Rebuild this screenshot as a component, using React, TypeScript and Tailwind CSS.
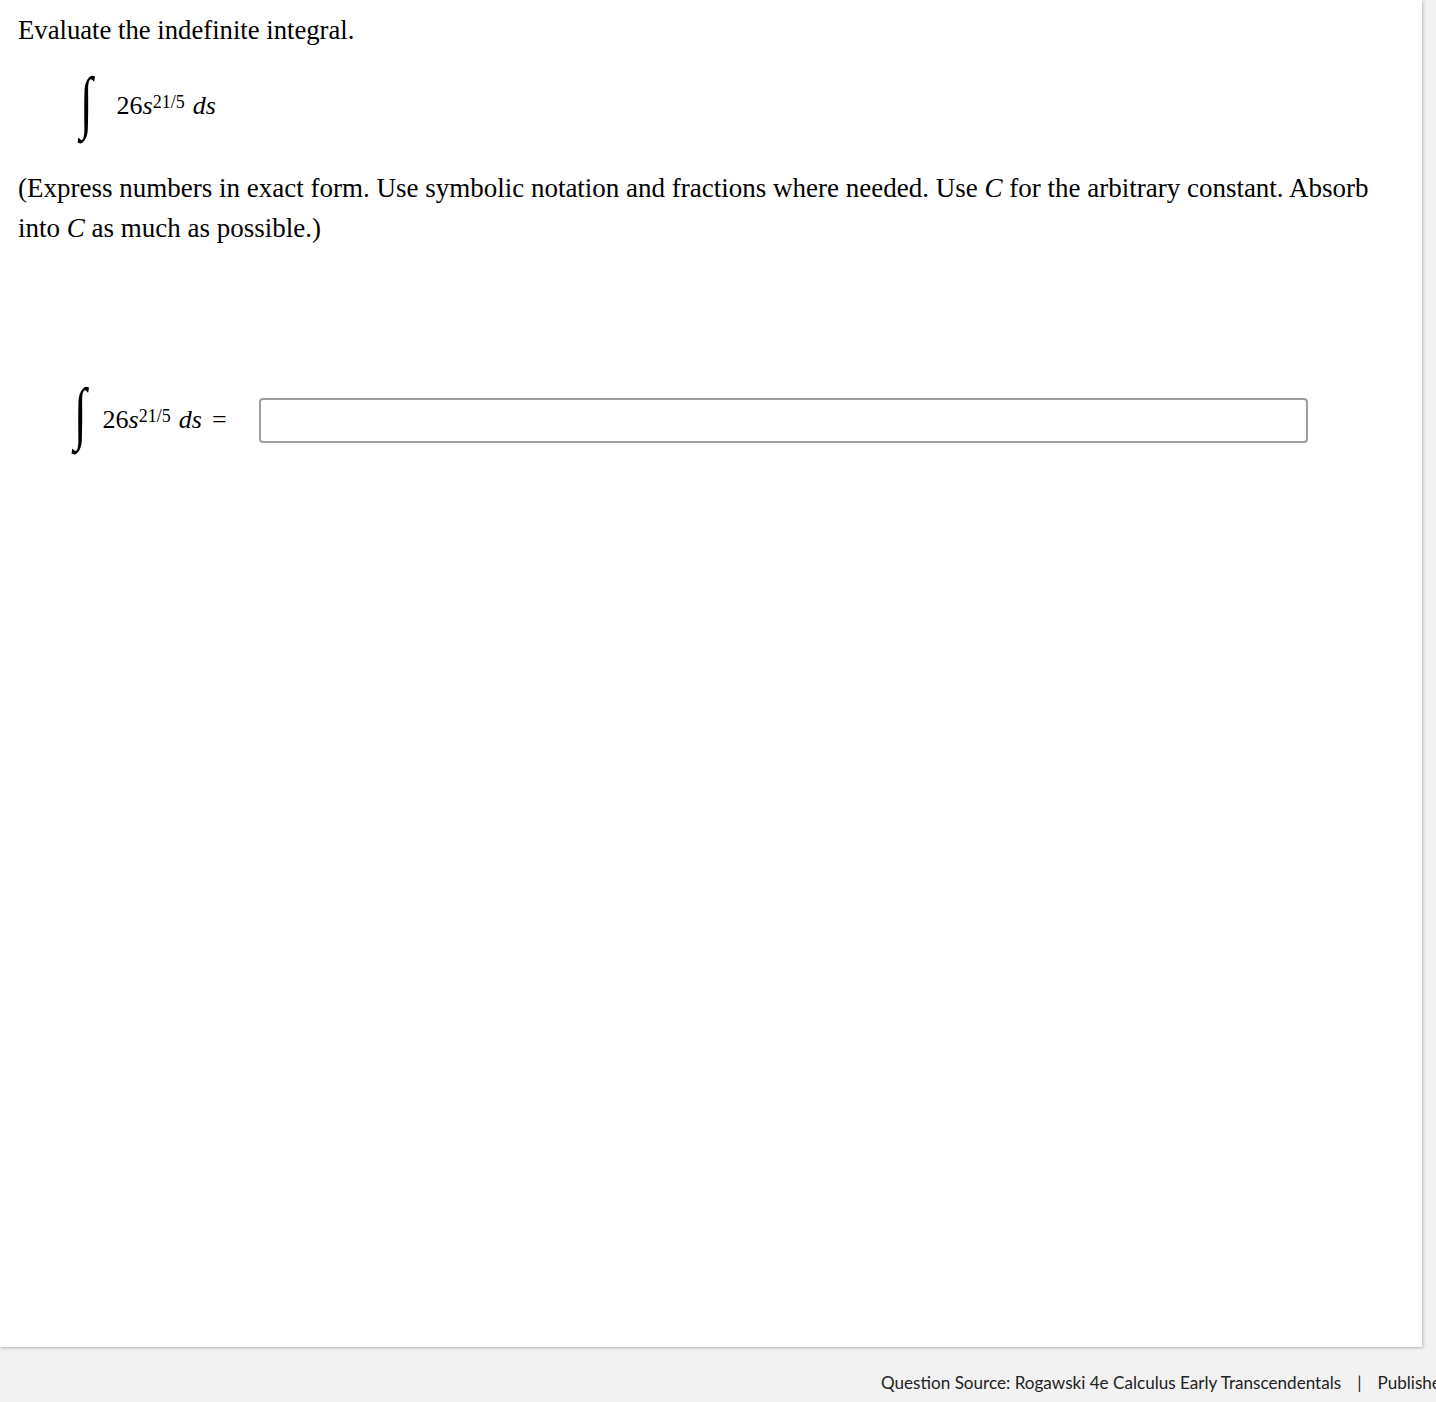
import React from 'react';

function IntegralExpr({ equals = false }: { equals?: boolean }) {
  return (
    <span className="inline-flex items-center font-['Liberation_Serif',serif] text-black">
      <span
        className={
          equals
            ? 'inline-block text-[46px] leading-none italic scale-y-[1.5] relative -top-[7px] mr-[16px]'
            : 'inline-block text-[46px] leading-none italic scale-y-[1.5] -mt-[2px] mr-[24px]'
        }
      >
        ∫
      </span>
      <span className={equals ? 'text-[26px] leading-none whitespace-nowrap' : 'text-[26px] leading-none whitespace-nowrap relative top-[3px]'}>
        26<i>s</i>
        <sup className="text-[18px] relative -top-[6px]">21/5</sup>
        <span className="ml-[8px]">
          <i>ds</i>
        </span>
        {equals && <span className="ml-[10px]">=</span>}
      </span>
    </span>
  );
}

export default function App() {
  return (
    <div className="h-[1402px] w-[1436px] bg-[#f2f2f2] overflow-hidden flex flex-col">
      <div className="w-[1422px] h-[1347px] shrink-0 bg-white shadow-[1px_1px_3px_rgba(0,0,0,0.25)] font-['Liberation_Serif',serif] text-black">
        <div className="px-[18px] pt-[12px]">
          <p className="text-[26.7px] leading-[36px]">Evaluate the indefinite integral.</p>

          <div className="mt-[30px] ml-[62px] h-[50px] flex items-center">
            <IntegralExpr />
          </div>

          <p className="mt-[40px] text-[27px] leading-[40px] pr-[30px]">
            (Express numbers in exact form. Use symbolic notation and fractions where needed. Use <i>C</i> for the
            arbitrary constant. Absorb into <i>C</i> as much as possible.)
          </p>

          <div className="mt-[149px] ml-[56px] flex items-center">
            <IntegralExpr equals />
            <input
              type="text"
              className="ml-[32px] w-[1049px] h-[45px] rounded-[4px] border-2 border-[#9e9e9e] bg-white outline-none"
            />
          </div>
        </div>
      </div>
      <div className="flex-1 pl-[881px] pt-[23px] whitespace-nowrap font-['Lato',sans-serif] text-[17.1px] text-[#222]">
        Question Source: Rogawski 4e Calculus Early Transcendentals<span className="mx-[16px]">|</span>Publisher: W.H. Freeman
      </div>
    </div>
  );
}
